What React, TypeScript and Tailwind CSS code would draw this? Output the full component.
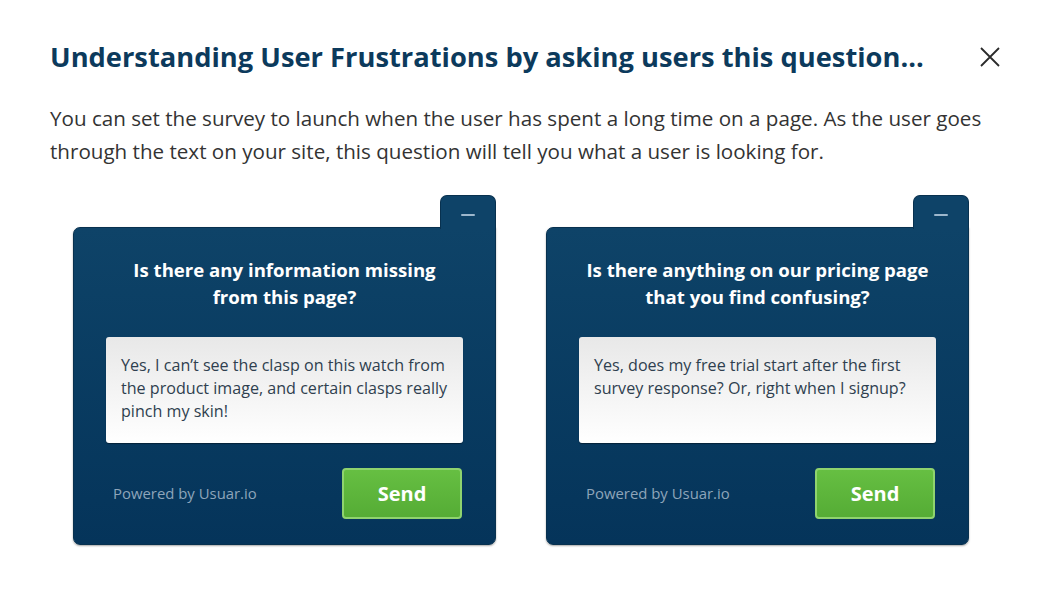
import React from "react";

function Card({ q1, q2, answer }: { q1: string; q2: string; answer: string }) {
  return (
    <div className="flex w-[423px] flex-col">
      <div className="flex justify-end">
        <div className="relative z-10 -mb-[2px] flex h-[34px] w-[56px] items-start justify-center rounded-t-[7px] border border-b-0 border-[#08314f] bg-[#0e4368] pt-[18px]">
          <div className="h-[2px] w-[14px] rounded bg-[#9db7cc]" />
        </div>
      </div>
      <div className="flex h-[318px] flex-col rounded-b-[7px] rounded-tl-[7px] border border-[#08314f] bg-gradient-to-b from-[#0e4368] to-[#05345a] shadow-[0_1px_2px_rgba(0,0,0,0.35)]">
        <div className="pt-[28px] text-center text-[18.6px] font-bold leading-[27px] text-white">
          <div>{q1}</div>
          <div>{q2}</div>
        </div>
        <div className="mx-auto mt-[27px] h-[106px] w-[357px] rounded-[3px] bg-gradient-to-b from-[#e8e8e8] to-[#ffffff] px-[15px] pt-[17px] text-[16.1px] leading-[23px] text-[#2f3f4f] shadow-[0_1px_1px_rgba(0,0,0,0.4)]">
          {answer}
        </div>
        <div className="mt-[25px] flex items-center justify-between pl-[39px] pr-[33px]">
          <span className="text-[14.9px] text-[#8ea5ba]">Powered by Usuar.io</span>
          <div className="flex h-[51px] w-[120px] items-center justify-center rounded-[4px] border-2 border-[#8fd36e] bg-gradient-to-b from-[#66bf42] to-[#55ac35] text-[20px] font-bold text-white">
            Send
          </div>
        </div>
      </div>
    </div>
  );
}

export default function App() {
  return (
    <div
      className="h-[600px] w-[1042px] bg-white px-[50px]"
      style={{ fontFamily: '"Open Sans", "Noto Sans", sans-serif' }}
    >
      <div className="flex items-center justify-between pt-[39px]">
        <h1 className="whitespace-nowrap text-[27.3px] font-bold leading-[36px] text-[#0c3a5c]">
          Understanding User Frustrations by asking users this question...
        </h1>
        <svg width="22" height="22" viewBox="0 0 22 22" className="mr-[-9px] shrink-0">
          <path d="M2 2 L20 20 M20 2 L2 20" stroke="#2a2a2a" strokeWidth="1.8" />
        </svg>
      </div>
      <p className="mt-[27px] text-[20.6px] leading-[33px] text-[#333333]">
        You can set the survey to launch when the user has spent a long time on a page. As the user goes through the text on your site, this question will tell you what a user is looking for.
      </p>
      <div className="mt-[27px] flex justify-center gap-[50px]">
        <Card
          q1="Is there any information missing"
          q2="from this page?"
          answer="Yes, I can’t see the clasp on this watch from the product image, and certain clasps really pinch my skin!"
        />
        <Card
          q1="Is there anything on our pricing page"
          q2="that you find confusing?"
          answer="Yes, does my free trial start after the first survey response? Or, right when I signup?"
        />
      </div>
    </div>
  );
}
